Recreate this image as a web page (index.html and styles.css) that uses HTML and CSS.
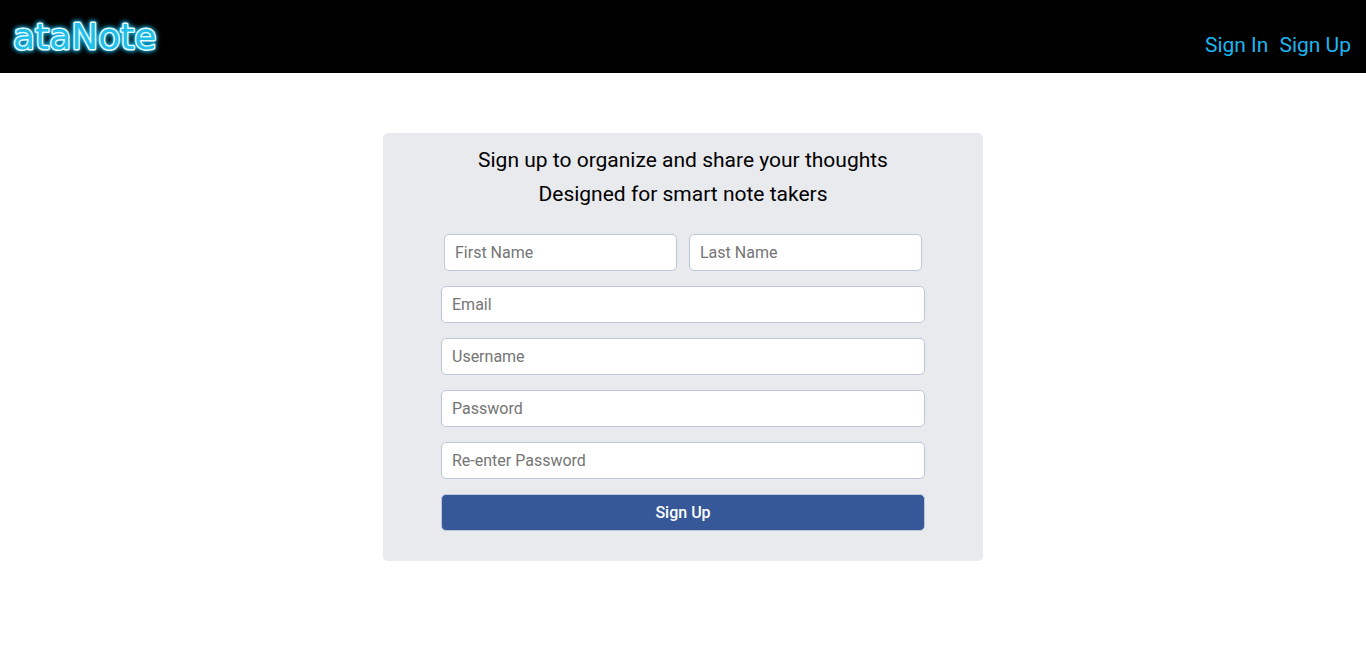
FILE: index.html
```html
<!DOCTYPE html>
<html lang="en">
<head>
  <meta charset="utf-8">
  <meta name="viewport" content="width=device-width, initial-scale=1">
  <title>ataNote - Sign Up</title>
  <link rel="stylesheet" href="styles.css">
</head>
<body>
  <header class="site-header">
    <a class="logo" href="#" aria-label="ataNote">
      <svg class="logo-mark" width="170" height="73" viewBox="0 0 170 73" aria-hidden="true">
        <defs>
          <filter id="glow" x="-20%" y="-60%" width="140%" height="220%">
            <feGaussianBlur stdDeviation="2"/>
          </filter>
        </defs>
        <text class="logo-glow" x="13" y="49" filter="url(#glow)">ataNote</text>
        <text class="logo-text" x="13" y="49">ataNote</text>
      </svg>
    </a>
    <nav class="site-nav">
      <a class="nav-link" href="#">Sign In</a>
      <a class="nav-link" href="#">Sign Up</a>
    </nav>
  </header>
  <main class="page">
    <form class="card">
      <h1 class="card-title">Sign up to organize and share your thoughts<br>Designed for smart note takers</h1>
      <div class="fields">
        <div class="name-row">
          <input class="field" type="text" placeholder="First Name" aria-label="First Name">
          <input class="field" type="text" placeholder="Last Name" aria-label="Last Name">
        </div>
        <input class="field" type="email" placeholder="Email" aria-label="Email">
        <input class="field" type="text" placeholder="Username" aria-label="Username">
        <input class="field" type="password" placeholder="Password" aria-label="Password">
        <input class="field" type="password" placeholder="Re-enter Password" aria-label="Re-enter Password">
        <button class="submit" type="submit">Sign Up</button>
      </div>
    </form>
  </main>
</body>
</html>
```

FILE: styles.css
```css
* {
  box-sizing: border-box;
}

body {
  margin: 0;
  background: #fff;
  color: #000;
  font-family: Roboto, "Liberation Sans", sans-serif;
}

.site-header {
  display: flex;
  justify-content: space-between;
  align-items: flex-end;
  padding-right: 15px;
  background: #000;
}

.logo,
.logo-mark {
  display: block;
}

.logo-text,
.logo-glow {
  font: 36px "DejaVu Sans", sans-serif;
  stroke-linejoin: round;
}

.logo-text {
  fill: #21bfe9;
  stroke: #e3faff;
  stroke-width: 3px;
  paint-order: stroke;
}

.logo-glow {
  fill: #12b5e5;
  stroke: #12b5e5;
  stroke-width: 5px;
}

.site-nav {
  display: flex;
  gap: 11px;
  padding-bottom: 16px;
}

.nav-link {
  color: #1cb5ee;
  font-size: 21px;
  line-height: 24px;
  text-decoration: none;
}

.page {
  display: flex;
  justify-content: center;
  padding: 60px 15px;
}

.card {
  width: 100%;
  max-width: 600px;
  padding: 10px 58px 30px;
  border-radius: 5px;
  background: #e9eaee;
}

.card-title {
  margin: 0 0 23px;
  font-size: 21px;
  font-weight: 400;
  line-height: 34px;
  text-align: center;
}

.fields {
  display: grid;
  gap: 15px;
}

.name-row {
  display: grid;
  grid-template-columns: 1fr 1fr;
  gap: 12px;
  padding: 0 3px;
}

.field,
.submit {
  width: 100%;
  height: 37px;
  padding: 0 10px;
  border: 1px solid #bdc7d8;
  border-radius: 5px;
  font-family: Roboto, "Liberation Sans", sans-serif;
  font-size: 16px;
}

.field {
  background: #fff;
}

.field::placeholder {
  color: #757575;
}

.submit {
  background: #365899;
  color: #fff;
  font-weight: 500;
}
```
